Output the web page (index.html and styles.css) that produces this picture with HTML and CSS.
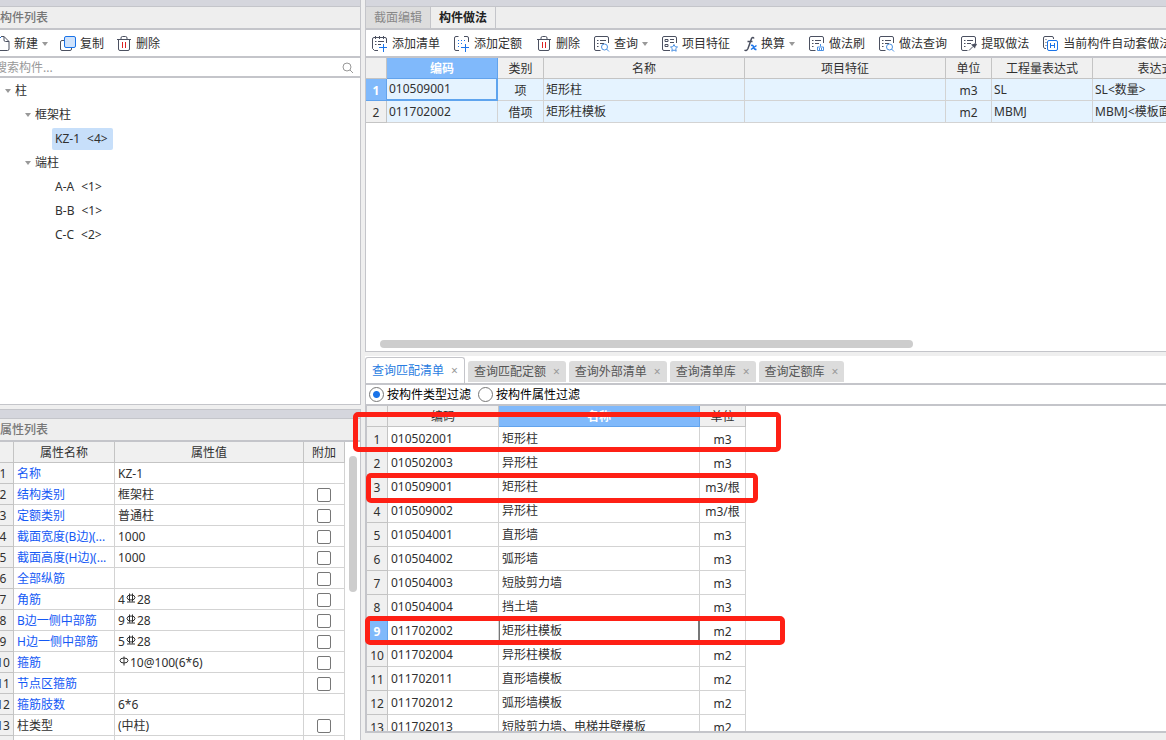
FILE: index.html
```html
<!DOCTYPE html>
<html lang="zh-CN">
<head>
<meta charset="utf-8">
<title>构件做法</title>
<link rel="stylesheet" href="styles.css">
</head>
<body>
<svg class="defs" aria-hidden="true">
  <symbol id="trash" viewBox="0 0 16 16"><path d="M1 3.500h14M5 3V2q0-1.500 1.500-1.500h3Q11 .5 11 2v1M2.500 3.500V13q0 1.500 1.500 1.500h8q1.500 0 1.500-1.500V3.500"/><path class="red" d="M6.500 6v6M9.500 6v6"/></symbol>
  <symbol id="sheet" viewBox="0 0 16 16"><path d="M6.500 14.500H2Q.5 14.500 .5 13V2Q.5 .5 2 .5h11q1.500 0 1.500 1.500V7M3 4.500h1.500M6 4.500h6M3 7.500h1.500M6 7.500h4M3 10.500h1.500"/></symbol>
  <symbol id="rebar" viewBox="0 0 10 10"><ellipse cx="5" cy="4.500" rx="4" ry="2.500"/><path d="M3.500 0.500v8M6.500 0.500v8M1 9h8" /></symbol>
  <symbol id="caret" viewBox="0 0 6 4"><path class="fill" d="M0 0h6L3 4z"/></symbol>
</svg>
<div class="app">
  <aside class="side">
    <section class="panel components">
      <div class="band"></div>
      <h2 class="title">构件列表</h2>
      <div class="toolbar toolbar-side">
        <button><svg class="icon" viewBox="0 0 16 16"><path d="M10 .5l5 5V13q0 1.500-1.500 1.500H5M10 .5v3.500q0 1.500 1.500 1.500H15M7 .5h3"/><path class="blue" d="M3 1.500h4M3 4.500h3"/></svg>新建<svg class="caret"><use href="#caret"/></svg></button>
        <button><svg class="icon" viewBox="0 0 16 16"><path d="M4 4.500H2Q.5 4.500 .5 6v7q0 1.500 1.500 1.500h8q1.500 0 1.500-1.500v-1"/><rect class="copy" x="4.500" y=".5" width="11" height="11" rx="1.500"/></svg>复制</button>
        <button><svg class="icon"><use href="#trash"/></svg>删除</button>
      </div>
      <div class="search">
        <input type="text" placeholder="搜索构件..." aria-label="搜索构件">
        <svg class="lens" viewBox="0 0 12 12"><circle cx="5" cy="5" r="4"/><path d="M8 8l3 3"/></svg>
      </div>
      <ul class="tree">
        <li><span class="node"><svg class="caret"><use href="#caret"/></svg>柱</span>
          <ul>
            <li><span class="node"><svg class="caret"><use href="#caret"/></svg>框架柱</span>
              <ul><li><span class="leaf selected"><span>KZ-1</span><span>&lt;4&gt;</span></span></li></ul>
            </li>
            <li><span class="node"><svg class="caret"><use href="#caret"/></svg>端柱</span>
              <ul>
                <li><span class="leaf"><span>A-A</span><span>&lt;1&gt;</span></span></li>
                <li><span class="leaf"><span>B-B</span><span>&lt;1&gt;</span></span></li>
                <li><span class="leaf"><span>C-C</span><span>&lt;2&gt;</span></span></li>
              </ul>
            </li>
          </ul>
        </li>
      </ul>
    </section>
    <section class="panel props">
      <div class="band band-props"></div>
      <h2 class="title">属性列表</h2>
      <div class="props-body">
        <table class="grid grid-props">
          <colgroup><col class="c-num"><col class="c-name"><col><col class="c-extra"></colgroup>
          <thead><tr><th></th><th>属性名称</th><th>属性值</th><th>附加</th></tr></thead>
          <tbody>
            <tr><th>1</th><td class="link">名称</td><td>KZ-1</td><td></td></tr>
            <tr><th>2</th><td class="link">结构类别</td><td>框架柱</td><td class="mid"><input type="checkbox" aria-label="结构类别"></td></tr>
            <tr><th>3</th><td class="link">定额类别</td><td>普通柱</td><td class="mid"><input type="checkbox" aria-label="定额类别"></td></tr>
            <tr><th>4</th><td class="link">截面宽度(B边)(...</td><td>1000</td><td class="mid"><input type="checkbox" aria-label="截面宽度"></td></tr>
            <tr><th>5</th><td class="link">截面高度(H边)(...</td><td>1000</td><td class="mid"><input type="checkbox" aria-label="截面高度"></td></tr>
            <tr><th>6</th><td class="link">全部纵筋</td><td></td><td class="mid"><input type="checkbox" aria-label="全部纵筋"></td></tr>
            <tr><th>7</th><td class="link">角筋</td><td>4<svg class="bar"><use href="#rebar"/></svg>28</td><td class="mid"><input type="checkbox" aria-label="角筋"></td></tr>
            <tr><th>8</th><td class="link">B边一侧中部筋</td><td>9<svg class="bar"><use href="#rebar"/></svg>28</td><td class="mid"><input type="checkbox" aria-label="B边一侧中部筋"></td></tr>
            <tr><th>9</th><td class="link">H边一侧中部筋</td><td>5<svg class="bar"><use href="#rebar"/></svg>28</td><td class="mid"><input type="checkbox" aria-label="H边一侧中部筋"></td></tr>
            <tr><th>10</th><td class="link">箍筋</td><td><svg class="bar" viewBox="0 0 10 10"><ellipse cx="5" cy="4.500" rx="4" ry="2.500"/><path d="M5 .5v9"/></svg>10@100(6*6)</td><td class="mid"><input type="checkbox" aria-label="箍筋"></td></tr>
            <tr><th>11</th><td class="link">节点区箍筋</td><td></td><td class="mid"><input type="checkbox" aria-label="节点区箍筋"></td></tr>
            <tr><th>12</th><td class="link">箍筋肢数</td><td>6*6</td><td></td></tr>
            <tr><th>13</th><td>柱类型</td><td>(中柱)</td><td class="mid"><input type="checkbox" aria-label="柱类型"></td></tr>
            <tr><th></th><td></td><td></td><td class="mid"><input type="checkbox" aria-label="其他"></td></tr>
          </tbody>
        </table>
        <div class="vscroll"><div class="vthumb"></div></div>
      </div>
    </section>
  </aside>
  <main class="work">
    <section class="panel method">
      <div class="band"></div>
      <nav class="tabs"><button class="tab">截面编辑</button><button class="tab active">构件做法</button></nav>
      <div class="toolbar">
        <button><svg class="icon" viewBox="0 0 16 16"><path d="M6 14.500H2.500L.5 12.500V3q0-1.500 1.500-1.500h11q1.500 0 1.500 1.500V7M3.500 0v3M7.500 0v3M11.500 0v3M3 5.500h1.500M6 5.500h6M3 8.500h1.500M6 8.500h3"/><path class="blue" d="M7 11.500h8M11.500 8v8"/></svg>添加清单</button>
        <button><svg class="icon" viewBox="0 0 16 16"><path d="M4.500 .5H2Q.5 .5 .5 2v11q0 1.500 1.500 1.500h3M10 .5h3q1.500 0 1.500 1.500v4"/><path class="blue" d="M4 4.500h1M7 4.500h1M10 4.500h1M4 7.500h1M7 7.500h1M4 10.500h1M7 11.500h8M11.500 8v8"/></svg>添加定额</button>
        <button><svg class="icon"><use href="#trash"/></svg>删除</button>
        <button><svg class="icon" viewBox="0 0 16 16"><use href="#sheet"/><circle class="sky" cx="10.500" cy="11" r="3"/><path class="sky" d="M12.500 13l2.500 2.500"/></svg>查询<svg class="caret"><use href="#caret"/></svg></button>
        <button><svg class="icon" viewBox="0 0 16 16"><path d="M8 14.500H2Q.5 14.500 .5 13V2Q.5 .5 2 .5h11q1.500 0 1.500 1.500V7M3 3.500h3v2H3zM3 8.500h3v2H3zM8 3.500h4M8 6.500h4"/><path class="sky" d="M12 8.500l1.100 2.200 2.400.3-1.800 1.700.5 2.500-2.200-1.200-2.200 1.200.5-2.500L8.500 11l2.400-.3z"/></svg>项目特征</button>
        <button><svg class="icon icon-fx" viewBox="0 0 13 16"><path class="fx" d="M10 2.500Q9 .5 7.500 2.500L4 12.500Q2.500 15.500.5 14M3.500 5.500h5"/><path class="cross" d="M7 9.500q2-1 2.500 1.500t3 2.500M12.500 9.500L7 13.500"/></svg>换算<svg class="caret"><use href="#caret"/></svg></button>
        <button><svg class="icon" viewBox="0 0 16 16"><use href="#sheet"/><path class="sky" d="M11.500 8v2.500M8.500 11h6v3.500h-6zM10.500 12v2.500M12.500 12v2.500"/></svg>做法刷</button>
        <button><svg class="icon" viewBox="0 0 16 16"><use href="#sheet"/><circle class="sky" cx="10.500" cy="11" r="3"/><path class="sky" d="M12.500 13l2.500 2.500"/></svg>做法查询</button>
        <button><svg class="icon" viewBox="0 0 16 16"><use href="#sheet"/><path d="M8 14.500l4-4"/><path class="fill-dark" d="M10 8.500l4 4 .5-2 1.500-2-1.500-1.500-2 1z"/></svg>提取做法</button>
        <button><svg class="icon" viewBox="0 0 16 16"><path d="M3 12.500H1.500L.5 11V2Q.5 .5 2 .5h7q1.500 0 1.500 1.500v1M2.500 3.500h1M2.500 6.500h1M2.500 9.500h1"/><rect class="blue" x="4.500" y="4.500" width="10" height="10" rx="1.500"/><path class="blue" d="M7.500 7v5M11.500 7v5M7.500 9.500h4"/></svg>当前构件自动套做法</button>
      </div>
      <div class="method-body">
        <table class="grid grid-method">
          <colgroup><col class="m-num"><col class="m-code"><col class="m-kind"><col class="m-name"><col class="m-name"><col class="m-unit"><col class="m-expr"><col class="m-note"></colgroup>
          <thead><tr><th></th><th class="hot">编码</th><th>类别</th><th>名称</th><th>项目特征</th><th>单位</th><th>工程量表达式</th><th>表达式说明</th></tr></thead>
          <tbody>
            <tr><th class="hot">1</th><td class="focus">010509001</td><td class="mid">项</td><td>矩形柱</td><td></td><td class="mid">m3</td><td>SL</td><td>SL&lt;数量&gt;</td></tr>
            <tr><th>2</th><td>011702002</td><td class="mid">借项</td><td>矩形柱模板</td><td></td><td class="mid">m2</td><td>MBMJ</td><td>MBMJ&lt;模板面积&gt;</td></tr>
          </tbody>
        </table>
        <div class="hscroll"><div class="hthumb"></div></div>
      </div>
    </section>
    <section class="query">
      <nav class="qtabs">
        <button class="qtab active">查询匹配清单<span class="x">×</span></button>
        <button class="qtab">查询匹配定额<span class="x">×</span></button>
        <button class="qtab">查询外部清单<span class="x">×</span></button>
        <button class="qtab">查询清单库<span class="x">×</span></button>
        <button class="qtab">查询定额库<span class="x">×</span></button>
      </nav>
      <div class="filters">
        <label><input type="radio" name="filter" checked>按构件类型过滤</label>
        <label><input type="radio" name="filter">按构件属性过滤</label>
      </div>
      <div class="query-body">
        <table class="grid grid-query">
          <colgroup><col class="q-num"><col class="m-code"><col class="m-name"><col class="m-unit"></colgroup>
          <thead><tr><th></th><th>编码</th><th class="hot">名称</th><th>单位</th></tr></thead>
          <tbody>
            <tr><th>1</th><td>010502001</td><td>矩形柱</td><td class="mid">m3</td></tr>
            <tr><th>2</th><td>010502003</td><td>异形柱</td><td class="mid">m3</td></tr>
            <tr><th>3</th><td>010509001</td><td>矩形柱</td><td class="mid">m3/根</td></tr>
            <tr><th>4</th><td>010509002</td><td>异形柱</td><td class="mid">m3/根</td></tr>
            <tr><th>5</th><td>010504001</td><td>直形墙</td><td class="mid">m3</td></tr>
            <tr><th>6</th><td>010504002</td><td>弧形墙</td><td class="mid">m3</td></tr>
            <tr><th>7</th><td>010504003</td><td>短肢剪力墙</td><td class="mid">m3</td></tr>
            <tr><th>8</th><td>010504004</td><td>挡土墙</td><td class="mid">m3</td></tr>
            <tr><th class="hot">9</th><td>011702002</td><td class="current">矩形柱模板</td><td class="mid">m2</td></tr>
            <tr><th>10</th><td>011702004</td><td>异形柱模板</td><td class="mid">m2</td></tr>
            <tr><th>11</th><td>011702011</td><td>直形墙模板</td><td class="mid">m2</td></tr>
            <tr><th>12</th><td>011702012</td><td>弧形墙模板</td><td class="mid">m2</td></tr>
            <tr><th>13</th><td>011702013</td><td>短肢剪力墙、电梯井壁模板</td><td class="mid">m2</td></tr>
          </tbody>
        </table>
      </div>
      <div class="mark mark-a"></div>
      <div class="mark mark-b"></div>
      <div class="mark mark-c"></div>
    </section>
  </main>
</div>
</body>
</html>
```
FILE: styles.css
```css
* { box-sizing: border-box; }
body {
  margin: 0;
  background: #efefef;
  color: #303030;
  font: 12px/20px "Noto Sans", "Noto Sans CJK SC", sans-serif;
}
button, input { font: inherit; color: inherit; }
button { border: 0; padding: 0; background: none; white-space: nowrap; }
ul { list-style: none; margin: 0; padding: 0; }
.defs { position: absolute; width: 0; height: 0; }

.app {
  display: grid;
  grid-template-columns: minmax(0, 361fr) minmax(0, 801fr);
  gap: 4px;
  height: 100vh;
  overflow: hidden;
}
.side, .work { display: grid; gap: 4px; min-height: 0; }
.side { grid-template-rows: minmax(0, 405fr) minmax(0, 331fr); }
.work { grid-template-rows: minmax(0, 352fr) minmax(0, 384fr); }
.panel { display: flex; flex-direction: column; min-height: 0; overflow: hidden; }
.side .panel { border-right: 1px solid #c4c5ca; }
.components { background: #fff; border-bottom: 1px solid #c4c5ca; }
.method { background: #fff; border-left: 1px solid #c4c5ca; border-bottom: 1px solid #c4c5ca; }

.band { flex: none; height: 7px; background: #d5d6dd; border-bottom: 1px solid #c4c5ca; }
.band-props { height: 10px; border-top: 1px solid #c4c5ca; }
.title {
  flex: none;
  height: 23px;
  margin: 0;
  border-bottom: 2px solid #c4c5ca;
  background: #eee;
  color: #777;
  font-size: 12px;
  font-weight: 500;
  line-height: 21px;
}

.toolbar {
  flex: none;
  display: flex;
  gap: 14px;
  height: 28px;
  padding: 2px 0 0 6px;
  border-bottom: 2px solid #c4c5ca;
  background: #fff;
  overflow: hidden;
}
.toolbar-side { gap: 12px; padding-left: 0; }
.toolbar-side button:first-child { margin-left: -6px; }
.toolbar button { flex: none; display: flex; align-items: center; gap: 4px; }
.icon { width: 16px; height: 16px; fill: none; stroke: #4b5060; }
.icon-fx { width: 13px; }
.caret { flex: none; width: 6px; height: 4px; }
.fill { fill: #999; stroke: none; }
.fill-dark { fill: #4b5060; stroke: none; }
.red { stroke: #d22; }
.blue { stroke: #1a73e8; }
.sky { stroke: #4a90e2; fill: #fff; }
.copy { stroke: #1a73e8; fill: #cfe2fb; }
.fx { stroke-width: 1.5; }
.cross { stroke: #1a73e8; stroke-width: 1.5; }

.search { flex: none; display: flex; align-items: center; height: 20px; padding: 1px 6px 0 0; border-bottom: 2px solid #c4c5ca; }
.search input { flex: 1; min-width: 0; height: 17px; margin-left: -9px; border: 0; padding: 1px 4px 0; outline: 0; background: none; }
.search input::placeholder { color: #999; }
.lens { width: 12px; height: 12px; fill: none; stroke: #999; }

.tree { padding: 1px 0 0 5px; line-height: 24px; }
.tree ul { padding-left: 20px; }
.node { display: flex; align-items: center; gap: 4px; }
.leaf { display: flex; gap: 7px; width: fit-content; height: 22px; margin: 1px 0 1px 7px; padding: 0 5px 0 3px; border-radius: 2px; line-height: 22px; }
.tree li { overflow: hidden; }
.selected { background: #c7dffa; }

.grid { flex: none; table-layout: fixed; border-collapse: separate; border-spacing: 0; }
.grid th, .grid td {
  height: 21px;
  padding: 2px 2px 0;
  overflow: hidden;
  border: 0 solid #d3d3d3;
  border-width: 0 1px 1px 0;
  background: #fff;
  font-weight: 400;
  line-height: 18px;
  text-align: left;
  white-space: nowrap;
}
.grid th { padding: 2px 0 0; background: #f0f0f0; border-color: #c4c4c4; text-align: center; }
.grid .mid { padding: 2px 0 0; text-align: center; }
.grid .hot { background: #80b9fb; color: #fff; border-color: #62a3ec; font-weight: 700; }

.props-body { flex: 1; display: flex; min-height: 0; overflow: hidden; background: #fff; }
.grid-props { flex: 1; align-self: flex-start; min-width: 0; margin-left: -7px; }
.grid-props td { padding: 2px 3px 0; }
.c-num { width: 21px; }
.c-name { width: 101px; }
.c-extra { width: 41px; }
.grid .link { color: #1459f5; }
.bar { width: 10px; height: 10px; margin: 0 1px; vertical-align: 1px; fill: none; stroke: #303030; }
input[type="checkbox"] {
  appearance: none;
  display: block;
  width: 14px;
  height: 14px;
  margin: 0 auto;
  border: 1px solid #777;
  border-radius: 2px;
  background: #fff;
}
.vscroll { flex: none; width: 15px; padding: 14px 3px 0 4px; }
.vthumb { height: 136px; border-radius: 4px; background: #cdcdcd; }

.tabs { flex: none; display: flex; height: 23px; border-bottom: 2px solid #c4c5ca; background: #eee; }
.tab { width: 65px; border-right: 1px solid #c4c5ca; background: #ddd; color: #888; }
.tab.active { background: #eee; color: #222; font-weight: 700; }
.method-body { flex: 1; display: flex; flex-direction: column; min-height: 0; overflow: hidden; }
.grid-method { width: 877px; }
.grid-method tbody th, .grid-method tbody td { height: 22px; }
.grid-method tbody td { padding-top: 0; background: #e5f3ff; }
.grid .focus { border: 1px solid #5fa4ee; border-width: 0 2px 2px 0; }
.m-num { width: 21px; }
.q-num { width: 21px; }
.m-code { width: 111px; }
.m-kind, .m-unit { width: 46px; }
.m-name { width: 201px; }
.m-expr { width: 101px; }
.m-note { width: 150px; }
.hscroll { margin-top: auto; padding: 0 14px 3px; }
.hthumb { width: 69%; height: 8px; border-radius: 4px; background: #cdcdcd; }

.query { position: relative; display: flex; flex-direction: column; min-height: 0; }
.qtabs { flex: none; display: flex; align-items: flex-end; gap: 3px; height: 27px; background: #fff; }
.qtab {
  display: flex;
  align-items: center;
  gap: 7px;
  height: 21px;
  margin-bottom: 1px;
  padding: 0 6px;
  border-radius: 3px 3px 0 0;
  background: #dcdcdc;
  color: #555;
}
.qtab.active { height: 26px; margin: 0; border: 1px solid #c4c5ca; border-bottom: 0; background: #fff; color: #2a7de1; }
.qtab .x { color: #999; }
.filters { flex: none; display: flex; gap: 7px; height: 23px; padding-left: 3px; border: 2px solid #c4c5ca; border-width: 2px 0 2px 1px; background: #fff; color: #000; }
.filters label { display: flex; align-items: center; gap: 3px; }
input[type="radio"] {
  appearance: none;
  width: 15px;
  height: 15px;
  margin: 0;
  border: 1px solid #777;
  border-radius: 50%;
  background: #fff;
}
input[type="radio"]:checked { background: radial-gradient(circle, #1a73e8 3px, #fff 4px); }
.query-body { flex: 1; min-height: 0; margin-bottom: 7px; overflow: hidden; border: 2px solid #c4c5ca; border-width: 0 0 2px 2px; background: #fff; }
.grid-query { width: 379px; }
.grid-query tbody th, .grid-query tbody td { height: 24px; }
.grid-query tbody td { padding: 0 3px; }
.grid .current { border-right: 2px solid #777; box-shadow: inset 1px 0 #777; }

.mark { position: absolute; border: 5px solid #fe2015; border-radius: 5px; }
.mark-a { top: 56px; left: -12px; width: 428px; height: 40px; }
.mark-b { top: 117px; left: 1px; width: 392px; height: 30px; }
.mark-c { top: 260px; left: 0; width: 420px; height: 29px; }
```
